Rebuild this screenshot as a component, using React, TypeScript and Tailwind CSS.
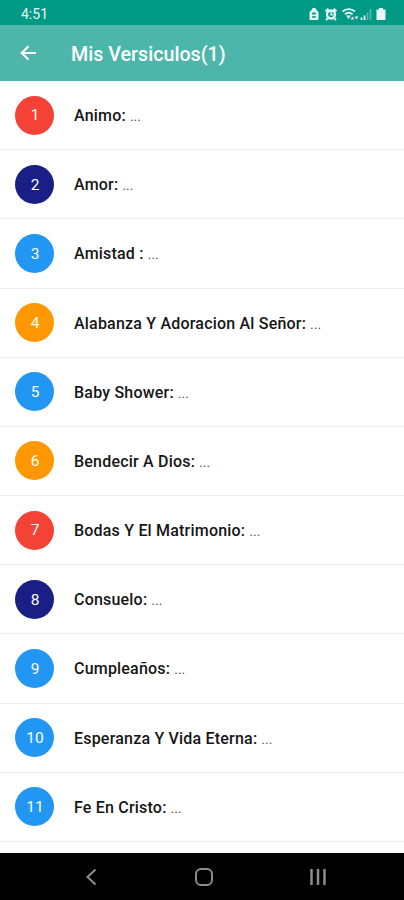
const topics = [
  { name: "Animo:", color: "bg-[#f44336]" },
  { name: "Amor:", color: "bg-[#1a1f86]" },
  { name: "Amistad :", color: "bg-[#2196f3]" },
  { name: "Alabanza Y Adoracion Al Señor:", color: "bg-[#ff9800]" },
  { name: "Baby Shower:", color: "bg-[#2196f3]" },
  { name: "Bendecir A Dios:", color: "bg-[#ff9800]" },
  { name: "Bodas Y El Matrimonio:", color: "bg-[#f44336]" },
  { name: "Consuelo:", color: "bg-[#1a1f86]" },
  { name: "Cumpleaños:", color: "bg-[#2196f3]" },
  { name: "Esperanza Y Vida Eterna:", color: "bg-[#2196f3]" },
  { name: "Fe En Cristo:", color: "bg-[#2196f3]" },
];

function StatusIcons() {
  return (
    <svg width="80" height="14" viewBox="0 0 80 14" fill="none" className="text-[#e8f8f5]">
      {/* battery saver */}
      <path
        fill="currentColor"
        fillRule="evenodd"
        d="M3.500 1h3l.5 1.500 2.500 2.500V12a1 1 0 0 1-1 1h-7a1 1 0 0 1-1-1V5L3 2.500zM3.200 5.500v2h3.600v-2zM3 9.200v1.600h4V9.200z"
      />
      {/* alarm */}
      <circle cx="22" cy="7.500" r="4" stroke="currentColor" strokeWidth="2.400" />
      <path stroke="currentColor" strokeWidth="1.400" d="M22 5v2.700h2.200" />
      <path stroke="currentColor" strokeWidth="2" d="M16.500 4.200l3-2.400M27.500 4.200l-3-2.400M18.500 11.500L17 13M25.500 11.500l1.500 1.500" />
      {/* wifi */}
      <path stroke="currentColor" strokeWidth="1.800" d="M33.500 4.500c3.700-3.200 8.800-3.200 12.500 0M36 7.300c2.300-1.900 5.300-1.900 7.500 0" />
      <path fill="currentColor" d="M37 8.500h5l-2.500 3.500zM41.500 12.500l2-3 2 3zM45.500 9.500h4l-2 3z" />
      {/* signal */}
      <path stroke="currentColor" strokeWidth="1.800" d="M52.500 13v-2.500M55.500 13V8.500" />
      <path stroke="currentColor" strokeWidth="1.800" opacity="0.35" d="M58.500 13V5.500M61.500 13V2" />
      <path fill="currentColor" d="M70 1h4v1.500h2.500V13h-9V2.500H70z" />
    </svg>
  );
}

export default function App() {
  return (
    <div className="flex h-[900px] w-[404px] flex-col overflow-hidden bg-white font-['Roboto',sans-serif]">
      <div className="flex h-[25px] shrink-0 items-center justify-between bg-[#009985] pt-[2px] pr-[15px] pl-[21px]">
        <span className="text-[14px] leading-none text-[#e8f8f5]">4:51</span>
        <StatusIcons />
      </div>

      <header className="flex h-14 shrink-0 items-center bg-[#4db6aa] pl-[20px] text-white">
        <svg width="17" height="16" viewBox="0 0 17 16" fill="none" stroke="currentColor" strokeWidth="2.100">
          <path d="M16 8H2M8.500 1.200L1.700 8l6.800 6.800" />
        </svg>
        <h1 className="ml-[34px] pt-[3px] text-[19.700px] font-medium">Mis Versiculos(1)</h1>
      </header>

      <ul className="flex-1 overflow-hidden">
        {topics.map((topic, i) => (
          <li key={topic.name} className="flex h-[69.180px] items-center border-b border-[#eeeeee] pl-[15px]">
            <span
              className={`flex size-[39px] items-center justify-center rounded-full pt-[2px] pl-px text-[15.500px] text-white ${topic.color}`}
            >
              {i + 1}
            </span>
            <span className="ml-5 flex items-baseline gap-[4px] pt-[2px]">
              <span className="text-[16px] font-medium tracking-[0.200px] text-[#161616]">{topic.name}</span>
              <span className="text-[14px] text-[#555]">...</span>
            </span>
          </li>
        ))}
      </ul>

      <nav className="flex h-[47px] shrink-0 items-center bg-black pl-[85px] text-[#8c8c8c]">
        <svg width="12" height="18" viewBox="0 0 12 18" fill="none" stroke="currentColor" strokeWidth="2">
          <path d="M10.500 1.500L2.500 9l8 7.500" />
        </svg>
        <span className="ml-[98px] size-[18px] rounded-[6px] border-2 border-current" />
        <svg width="16" height="16" viewBox="0 0 16 16" stroke="currentColor" strokeWidth="2.500" className="ml-[97px]">
          <path d="M1.500 0v16M8 0v16M14.500 0v16" />
        </svg>
      </nav>
    </div>
  );
}
